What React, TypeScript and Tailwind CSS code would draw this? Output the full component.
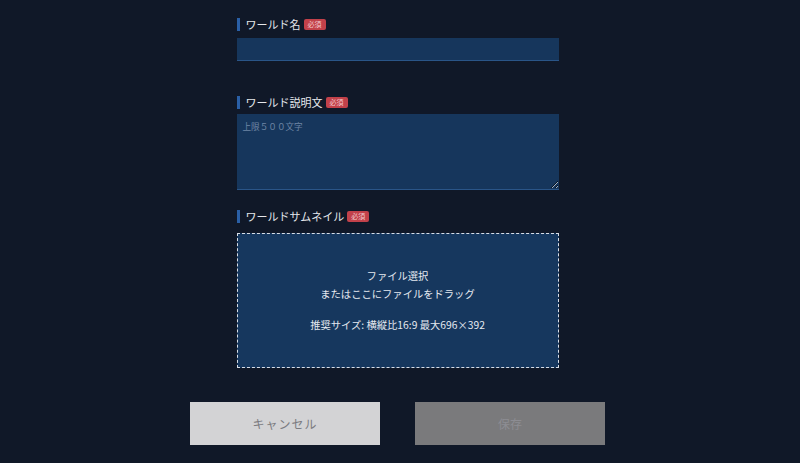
const Required = () => (
  <span className="ml-[3px] inline-flex h-[11px] items-center rounded-[2px] bg-[#c2414a] px-[4px] text-[7px] leading-none text-[#f3c9cc]">
    必須
  </span>
)

const FieldLabel = ({ text }: { text: string }) => (
  <div className="flex h-[14px] items-center">
    <span className="mr-[6px] h-[13px] w-[3px] bg-[#2a5fa6]" />
    <span className="text-[11px] leading-none text-[#e5e7eb]">{text}</span>
    <Required />
  </div>
)

const App = () => {
  return (
    <div
      className="flex h-[463px] w-[800px] flex-col items-center overflow-hidden bg-[#101828] pr-[5px]"
      style={{ fontFamily: '"Noto Sans CJK JP", "Noto Sans", sans-serif' }}
    >
      <div className="mt-[17px] flex w-[322px] flex-col">
        {/* World name */}
        <FieldLabel text="ワールド名" />
        <input
          className="mt-[7px] h-[23px] w-full border-b border-[#2a5588] bg-[#16365c] px-[6px] text-[11px] text-white outline-none"
        />

        {/* Description */}
        <div className="mt-[34px]">
          <FieldLabel text="ワールド説明文" />
        </div>
        <textarea
          placeholder="上限５００文字"
          className="mt-[5px] h-[76px] w-full resize border-b border-[#2a5588] bg-[#16365c] px-[6px] py-[6px] text-[8.6px] text-white outline-none placeholder:text-[#6f86a5]"
        />

        {/* Thumbnail */}
        <div className="mt-[19px]">
          <FieldLabel text="ワールドサムネイル" />
        </div>
        <div className="mt-[10px] flex h-[135px] w-full flex-col items-center justify-center border border-dashed border-[#d8dde6] bg-[#16375e] text-[10.3px] leading-[18px] text-[#e5e9f0]">
          <span>ファイル選択</span>
          <span>またはここにファイルをドラッグ</span>
          <span className="mt-[13px]">推奨サイズ: 横縦比16:9 最大696×392</span>
        </div>
      </div>

      {/* Actions */}
      <div className="mt-[34px] flex gap-[35px]">
        <button className="h-[43px] w-[190px] bg-[#d3d3d5] text-[12px] tracking-[1px] text-[#7b7b80]">
          キャンセル
        </button>
        <button className="h-[43px] w-[190px] bg-[#7a7a7c] text-[12px] text-[#8d8d93]">
          保存
        </button>
      </div>
    </div>
  )
}

export default App
